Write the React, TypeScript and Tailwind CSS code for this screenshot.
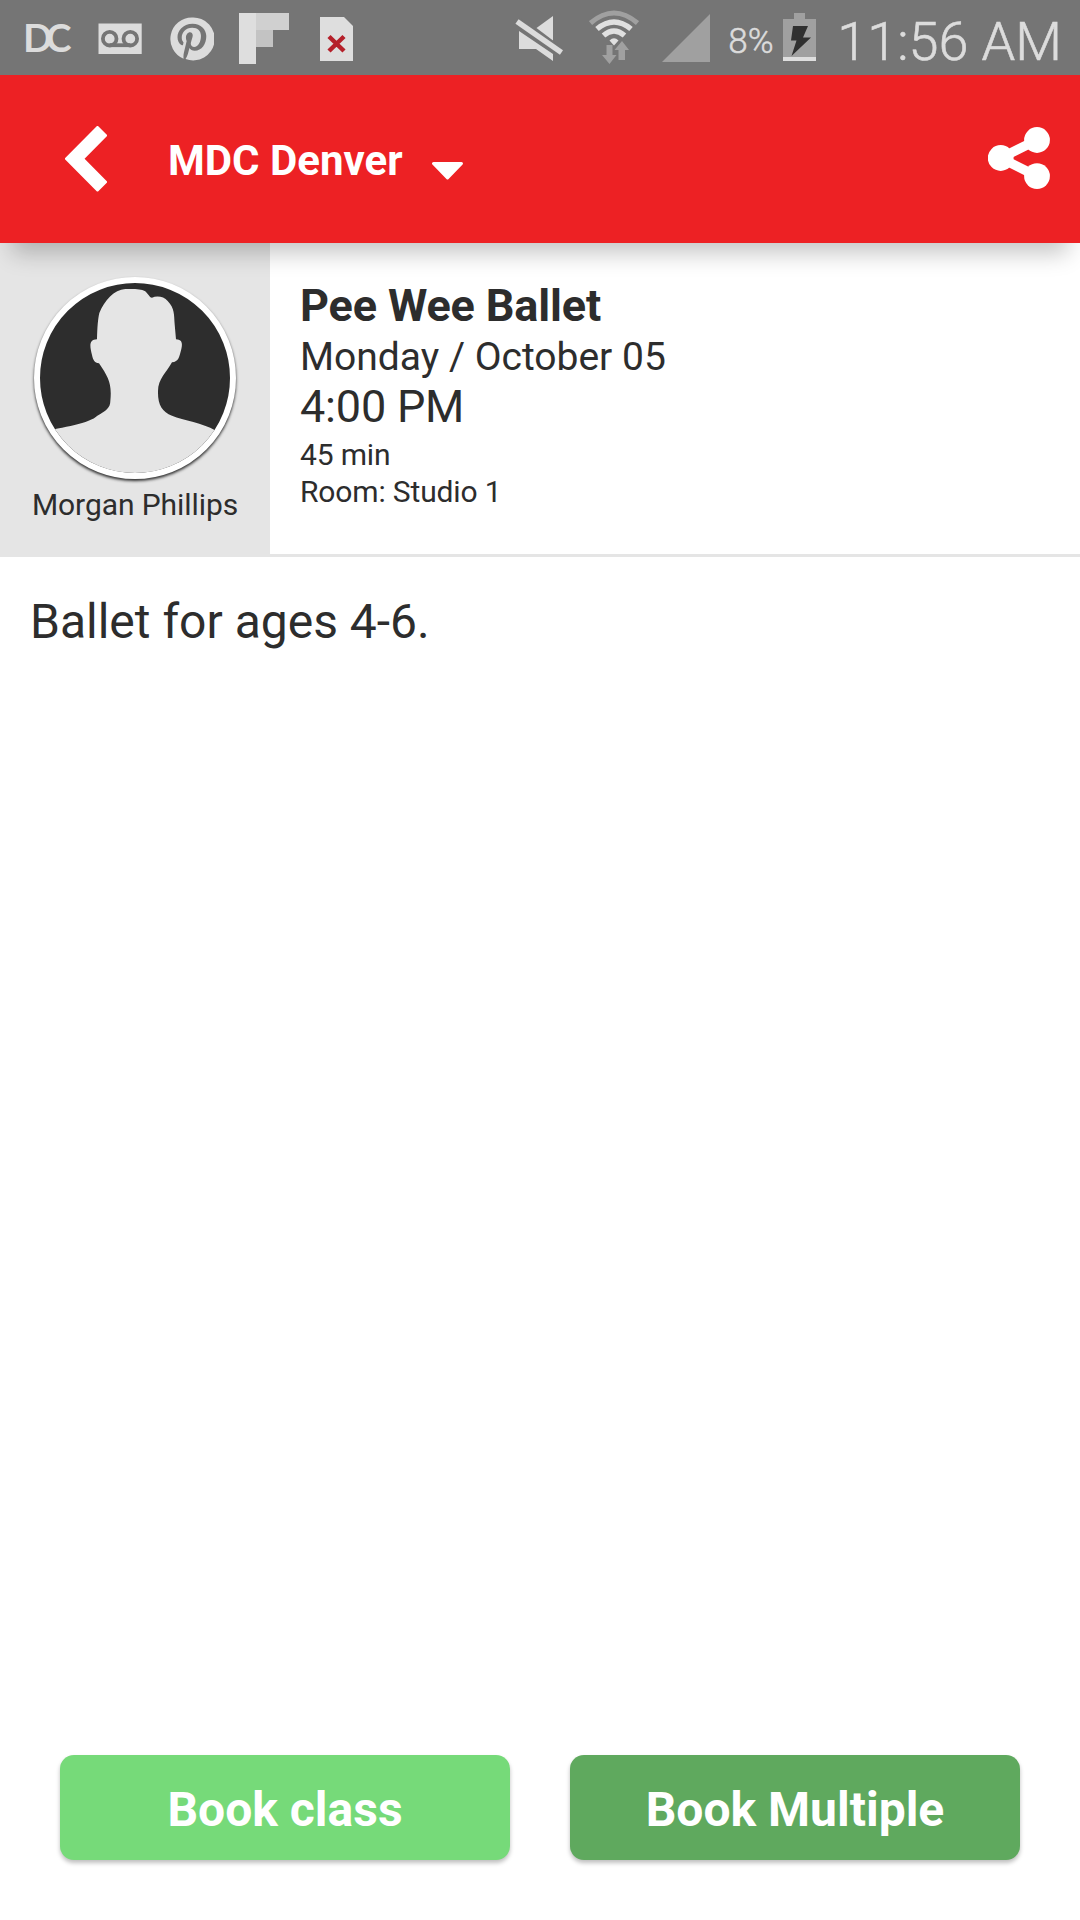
import type { ReactNode } from 'react';

interface BookButtonProps {
    label: string;
    className: string;
}

const StatusBar = () => (
    <div className="flex h-[75px] w-full bg-[#757575] text-[#dcdcdc]">
        {/* Notifications */}
        <span className="ml-[23px] mt-[14px] h-[46px] w-[49px] whitespace-nowrap font-['Lato'] text-[39px] font-bold leading-[46px] tracking-[-7px]">
            DC
        </span>
        <svg className="ml-[26px] mt-[23px]" width="44" height="31" viewBox="98 23 44 31">
            <rect x="98.5" y="23.5" width="43.2" height="30.5" fill="#dcdcdc" />
            <g fill="none" stroke="#757575" strokeWidth="3.8">
                <circle cx="109.7" cy="38.7" r="6.8" />
                <circle cx="130.3" cy="38.7" r="6.8" />
                <path d="M109.7 45.2H130.3" />
            </g>
        </svg>
        <svg className="ml-[28px] mt-[17px]" width="44" height="44" viewBox="0 0 24 24">
            <path
                fill="#dcdcdc"
                d="M12 .3a11.7 11.7 0 0 0-4.6 22.5c-.1-1-.1-2.300.2-3.400l1.500-6.300s-.4-.7-.4-1.800c0-1.700 1-3 2.200-3 1 0 1.500.8 1.500 1.700 0 1.100-.7 2.600-1 4.100-.3 1.200.6 2.200 1.800 2.200 2.200 0 3.700-2.800 3.700-6.100 0-2.500-1.700-4.400-4.800-4.400-3.500 0-5.700 2.600-5.700 5.500 0 1 .3 1.700.8 2.300.2.200.2.400.1.600l-.2.900c-.1.300-.300.4-.600.300-1.600-.7-2.400-2.500-2.400-4.400 0-3.300 2.800-7.300 8.300-7.300 4.400 0 7.400 3.200 7.400 6.700 0 4.600-2.500 8-6.300 8-1.300 0-2.500-.7-2.900-1.500l-.8 3.100c-.3 1-.8 2-1.300 2.900A11.700 11.700 0 1 0 12 .3z"
            />
        </svg>
        <svg className="ml-[25px] mt-[13px]" width="50" height="51" viewBox="0 0 50 51">
            <path fill="#dedede" d="M0 0h17v51H0z" />
            <path fill="#d0d0d0" d="M17 0h33v17H17z" />
            <path fill="#c3c3c3" d="M17 17h17v17H17z" />
        </svg>
        <svg className="ml-[31px] mt-[17px]" width="33" height="44" viewBox="0 0 33 44">
            <path fill="#dedede" d="M0 0h24l9 9v35H0z" />
            <path d="M9 19.500L24 34M24 19.500L9 34" stroke="#b5202a" strokeWidth="4.5" />
        </svg>

        {/* System icons */}
        <svg className="ml-auto mt-[15px] shrink-0" width="48" height="47" viewBox="515 15 48 47">
            <g fill="#dcdcdc">
                <path d="M553 16v24.500L536.500 28z" />
                <path d="M519 31l34 23v7l-17-12h-17z" />
            </g>
            <path d="M517 21.500L561.500 52.500" stroke="#757575" strokeWidth="9" />
            <path d="M517 21.500L561.500 52.500" stroke="#dcdcdc" strokeWidth="5.500" />
        </svg>
        <svg className="ml-[26px] mt-[10px] shrink-0" width="50" height="55" viewBox="589 10 50 55">
            <g fill="none">
                <path d="M590.500 23Q614 3 637.500 23" stroke="#a0a0a0" strokeWidth="5" />
                <path d="M597 29Q614 15 631 29" stroke="#e0e0e0" strokeWidth="5.500" />
                <path d="M603.500 35.500Q614 26.500 624.500 35.500" stroke="#e0e0e0" strokeWidth="5.500" />
            </g>
            <path fill="#e0e0e0" d="M609.500 40.500q4.500-4.500 9 0l-4.500 5z" />
            <path fill="#a0a0a0" d="M606.500 45h6v10h4l-7 9-7.500-9h4.500zM622 41l7 9h-4v10h-6.500v-10h-4z" />
        </svg>
        <svg className="ml-[23px] mt-[14px] shrink-0" width="48" height="48" viewBox="0 0 48 48">
            <path fill="#a0a0a0" d="M48 0v48H0z" />
        </svg>
        <span className="ml-[18px] mt-[21px] w-[46px] whitespace-nowrap text-[35px] font-light leading-[42px] [-webkit-text-stroke:0.5px_#dcdcdc]">
            8%
        </span>
        <svg className="ml-[9px] mt-[13px] shrink-0" width="33" height="48" viewBox="0 0 33 48">
            <path fill="#a0a0a0" d="M11 0h11v6h11v38H0V6h11z" />
            <path fill="#dedede" d="M0 44h33v4H0z" />
            <path fill="#303030" d="M10 13h15l-5 11.500h8L8.500 43l5-15.500H8z" />
        </svg>
        <span className="ml-[21px] mr-[18px] mt-[10px] whitespace-nowrap text-[54px] font-light leading-[64px] [-webkit-text-stroke:0.6px_#dcdcdc]">
            11:56 AM
        </span>
    </div>
);

const Header = () => (
    <header className="relative z-10 flex h-[168px] items-center bg-[#ed2124] pl-[65px] pr-[30px] text-white shadow-[0_22px_22px_-12px_rgba(0,0,0,0.23)]">
        <svg width="42" height="66" viewBox="65 126 42 66">
            <path
                d="M97.500 127.500L105.500 135.500L82.500 158.700L105.500 182L97.500 190L66.500 158.700z"
                fill="white"
                stroke="white"
                strokeWidth="3"
                strokeLinejoin="round"
            />
        </svg>
        <h1 className="ml-[61px] mt-[3px] whitespace-nowrap text-[42px] font-bold leading-[50px]">MDC Denver</h1>
        <svg className="ml-[29px] mt-[24px]" width="31" height="18" viewBox="0 0 31 18">
            <path d="M1.500 1.500h28L15.500 16z" fill="white" stroke="white" strokeWidth="3" strokeLinejoin="round" />
        </svg>
        <svg className="mb-[2px] ml-auto" width="62" height="62" viewBox="988 127 62 62">
            <path d="M1037 140L1000.700 158L1037 176.300" fill="none" stroke="white" strokeWidth="9.500" />
            <circle cx="1000.700" cy="158" r="12.900" fill="white" />
            <circle cx="1037" cy="140" r="12.900" fill="white" />
            <circle cx="1037" cy="176.100" r="12.900" fill="white" />
        </svg>
    </header>
);

const Avatar = () => (
    <div className="h-[202px] w-[202px] overflow-hidden rounded-full border-[6px] border-white bg-[#2d2d2d] shadow-[0_2px_3px_rgba(0,0,0,0.8)]">
        <svg width="190" height="190" viewBox="120 128 570 570">
            <path
                fill="#e5e5e5"
                d="M120 574C190 562 270 548 292 526C318 512 331 502 331 482C336 430 326 412 297 369C283 368 279 358 276 344C268 314 268 298 291 297C292 258 294 236 298 218C314 180 342 148 376 146C402 145 424 146 434 152C444 158 448 172 456 172C470 166 492 168 503 182C524 204 522 222 524 252L528 297C546 298 548 308 544 326C538 350 536 364 516 366C500 396 474 416 474 452C473 494 486 514 516 526C550 540 610 548 645 570L690 590V700H120z"
            />
        </svg>
    </div>
);

const Details = ({ children }: { children: ReactNode }) => (
    <div className="flex flex-1 flex-col border-b-[3px] border-[#e5e5e5] pl-[30px] pt-[37px]">{children}</div>
);

const BookButton = ({ label, className }: BookButtonProps) => (
    <button
        className={`h-[105px] flex-1 rounded-[14px] pt-[5px] text-[48px] font-bold leading-[56px] text-white shadow-[0_3px_4px_rgba(0,0,0,0.25)] ${className}`}
    >
        {label}
    </button>
);

export default function App() {
    return (
        <div className="flex h-[1920px] w-[1080px] flex-col overflow-hidden bg-white font-['Roboto',sans-serif] text-[#2d2d2d]">
            <StatusBar />
            <Header />

            {/* Class summary */}
            <section className="flex h-[314px]">
                <div className="flex w-[270px] flex-col items-center bg-[#e5e5e5] pt-[34px]">
                    <Avatar />
                    <p className="mt-2 whitespace-nowrap text-[30px] leading-[36px] tracking-[-0.08px]">Morgan Phillips</p>
                </div>
                <Details>
                    <h2 className="text-[45px] font-bold leading-[51px] tracking-[-0.15px]">Pee Wee Ballet</h2>
                    <p className="text-[39px] leading-[53px]">Monday / October 05</p>
                    <p className="mb-[7px] text-[45px] leading-[45px] tracking-[-0.2px]">4:00 PM</p>
                    <p className="text-[30px] leading-[37px] tracking-[-0.15px]">45 min</p>
                    <p className="text-[30px] leading-[37px] tracking-[-0.15px]">Room: Studio 1</p>
                </Details>
            </section>

            <p className="px-[30px] pt-[37px] text-[48px] leading-[56px]">Ballet for ages 4-6.</p>

            <div className="mb-[60px] mt-auto flex gap-[60px] px-[60px]">
                <BookButton label="Book class" className="bg-[#76da79]" />
                <BookButton label="Book Multiple" className="bg-[#5fa95e]" />
            </div>
        </div>
    );
}
